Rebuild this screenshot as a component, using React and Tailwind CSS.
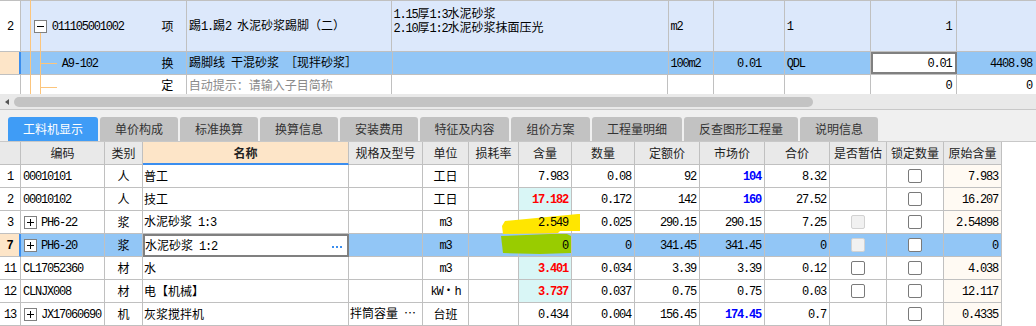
import React from 'react';

const MONO = "font-['Liberation_Mono',monospace] text-[12px] tracking-[-1.2px]";

function T({ s, className = '' }) {
  const parts = String(s).match(/[\x00-\x7f]+|[^\x00-\x7f]+/g) || [];
  return (
    <span className={`whitespace-pre relative z-[2] ${className}`}>
      {parts.map((p, i) =>
        /^[\x00-\x7f]/.test(p) ? (
          <span key={i} className={MONO}>{p}</span>
        ) : (
          <span key={i} className="text-[12px]">{p}</span>
        )
      )}
    </span>
  );
}

const GB = 'border-r border-b border-[#c0c0c0]';

function Cell({ children, className = '', b = GB }) {
  return (
    <div className={`h-[23px] flex items-center overflow-hidden whitespace-nowrap ${b} ${className}`}>
      {children}
    </div>
  );
}

function Box({ sign = '+' }) {
  return (
    <span className="w-[13px] h-[13px] border border-[#808080] bg-white flex items-center justify-center relative shrink-0">
      <span className="absolute w-[7px] h-px bg-black" />
      {sign === '+' && <span className="absolute h-[7px] w-px bg-black" />}
    </span>
  );
}

function Check({ kind }) {
  if (kind === 'disabled')
    return <span className="w-[14px] h-[14px] rounded-[2px] border border-[#d2d2d2] bg-[#f1f1f1]" />;
  return <span className="w-[14px] h-[14px] rounded-[2px] border border-[#7a7a7a] bg-white" />;
}

const rows = [
  { n: '1', code: '00010101', type: '人', name: '普工', spec: '', unit: '工日', qty: '7.983', num: '0.08', dp: '92', mp: '104', mpBlue: true, total: '8.32', est: null, orig: '7.983' },
  { n: '2', code: '00010102', type: '人', name: '技工', spec: '', unit: '工日', qty: '17.182', red: true, num: '0.172', dp: '142', mp: '160', mpBlue: true, total: '27.52', est: null, orig: '16.207' },
  { n: '3', plus: true, code: 'PH6-22', type: '浆', name: '水泥砂浆 1:3', spec: '', unit: 'm3', qty: '2.549', num: '0.025', dp: '290.15', mp: '290.15', total: '7.25', est: 'disabled', orig: '2.54898' },
  { n: '7', plus: true, sel: true, code: 'PH6-20', type: '浆', name: '水泥砂浆 1:2', spec: '', unit: 'm3', qty: '0', num: '0', dp: '341.45', mp: '341.45', total: '0', est: 'disabled', orig: '0' },
  { n: '11', code: 'CL17052360', type: '材', name: '水', spec: '', unit: 'm3', qty: '3.401', red: true, num: '0.034', dp: '3.39', mp: '3.39', total: '0.12', est: 'empty', orig: '4.038' },
  { n: '12', code: 'CLNJX008', type: '材', name: '电【机械】', spec: '', unit: 'kW·h', qty: '3.737', red: true, num: '0.037', dp: '0.75', mp: '0.75', total: '0.03', est: 'empty', orig: '12.117' },
  { n: '13', plus: true, code: 'JX17060690', type: '机', name: '灰浆搅拌机', spec: '拌筒容量 …', unit: '台班', qty: '0.434', num: '0.004', dp: '156.45', mp: '174.45', mpBlue: true, total: '0.7', est: null, orig: '0.4335' },
];

const headers = ['', '编码', '类别', '名称', '规格及型号', '单位', '损耗率', '含量', '数量', '定额价', '市场价', '合价', '是否暂估', '锁定数量', '原始含量'];

const tabs = [
  ['工料机显示', 'w-[90px]'],
  ['单价构成', 'w-[78px]'],
  ['标准换算', 'w-[78px]'],
  ['换算信息', 'w-[78px]'],
  ['安装费用', 'w-[78px]'],
  ['特征及内容', 'w-[89px]'],
  ['组价方案', 'w-[79px]'],
  ['工程量明细', 'w-[90px]'],
  ['反查图形工程量', 'w-[114px]'],
  ['说明信息', 'w-[78px]'],
];

function TableRow({ r }) {
  const bg = r.sel ? 'bg-[#92c6f6]' : 'bg-white';
  return (
    <>
      {r.sel ? (
        <Cell b="border-b border-b-[#c0c0c0] border-r-2 border-r-[#3b8eef]" className="justify-center bg-[#fde5c8] font-bold">
          <T s={r.n} />
        </Cell>
      ) : (
        <Cell className="justify-center bg-white">
          <T s={r.n} />
        </Cell>
      )}
      <Cell className={`${bg} ${r.plus ? 'pl-[3px]' : 'pl-[2px]'}`}>
        {r.plus && <Box />}
        <T s={r.code} className={r.plus ? 'ml-[4px]' : ''} />
      </Cell>
      <Cell className={`${bg} justify-center`}>
        <T s={r.type} />
      </Cell>
      {r.sel ? (
        <Cell b="border-2 border-[#808080]" className="bg-white pl-[0px] pr-[5px] justify-between">
          <T s={r.name} />
          <span className="flex gap-[2px] mt-[2px]">
            <span className="w-[2px] h-[2px] bg-[#3b8eef]" />
            <span className="w-[2px] h-[2px] bg-[#3b8eef]" />
            <span className="w-[2px] h-[2px] bg-[#3b8eef]" />
          </span>
        </Cell>
      ) : (
        <Cell className={`${bg} pl-[1px]`}>
          <T s={r.name} />
        </Cell>
      )}
      <Cell className={`${bg} pl-[1px]`}>
        <T s={r.spec} />
      </Cell>
      <Cell className={`${bg} justify-center`}>
        <T s={r.unit} />
      </Cell>
      <Cell className={bg} />
      <Cell className={`${r.red ? 'bg-[#d9f6f6]' : bg} justify-end pr-[3px]`}>
        <T s={r.qty} className={r.red ? 'text-[#ff0000] font-bold' : ''} />
      </Cell>
      <Cell className={`${bg} justify-end pr-[3px]`}>
        <T s={r.num} />
      </Cell>
      <Cell className={`${bg} justify-end pr-[3px]`}>
        <T s={r.dp} />
      </Cell>
      <Cell className={`${bg} justify-end pr-[3px]`}>
        <T s={r.mp} className={r.mpBlue ? 'text-[#0000ff] font-bold' : ''} />
      </Cell>
      <Cell className={`${bg} justify-end pr-[3px]`}>
        <T s={r.total} />
      </Cell>
      <Cell className={`${bg} justify-center`}>{r.est && <Check kind={r.est} />}</Cell>
      <Cell className={`${bg} justify-center`}>
        <Check kind="empty" />
      </Cell>
      <Cell className={`${r.sel ? bg : 'bg-[#fffaf3]'} justify-end pr-[3px]`}>
        <T s={r.orig} />
      </Cell>
    </>
  );
}

const TB = 'border-r border-[#c0c0c0]';

export default function App() {
  return (
    <div className="w-[1036px] h-[326px] overflow-hidden bg-white text-black text-[12px] font-['Noto_Sans_CJK_SC',sans-serif] leading-[14px]">
      {/* Top grid */}
      <div className="relative h-[94px]">
        <div className="flex h-[52px] border-t border-b border-[#c0c0c0] bg-[#dce8fb]">
          <div className={`w-[21px] bg-white flex items-center justify-center ${TB}`}><T s="2" /></div>
          <div className="w-[129px] flex items-center pl-[31px]"><T s="011105001002" /></div>
          <div className={`w-[38px] flex items-center justify-center ${TB}`}><T s="项" /></div>
          <div className={`w-[207px] flex items-center pl-[2px] ${TB}`}><T s="踢1.踢2 水泥砂浆踢脚（二）" /></div>
          <div className={`w-[278px] flex flex-col pl-[1px] pt-[5px] ${TB}`}>
            <div className="h-[14px] leading-[14px]"><T s="1.15厚1:3水泥砂浆" /></div>
            <div className="h-[14px] leading-[14px]"><T s="2.10厚1:2水泥砂浆抹面压光" /></div>
          </div>
          <div className={`w-[46px] flex items-center pl-[2px] ${TB}`}><T s="m2" /></div>
          <div className={`w-[71px] ${TB}`} />
          <div className={`w-[87px] flex items-center pl-[2px] ${TB}`}><T s="1" /></div>
          <div className={`w-[86px] flex items-center justify-end pr-[4px] ${TB}`}><T s="1" /></div>
          <div className="w-[80px]" />
        </div>
        <div className="flex h-[23px] border-b border-[#c0c0c0] bg-[#92c6f6]">
          <div className="w-[21px] bg-[#fde5c8] border-r-2 border-[#3b8eef]" />
          <div className="w-[129px] flex items-center pl-[41px]"><T s="A9-102" /></div>
          <div className={`w-[38px] flex items-center justify-center ${TB}`}><T s="换" /></div>
          <div className={`w-[207px] flex items-center pl-[2px] ${TB}`}><T s="踢脚线 干混砂浆 ［现拌砂浆］" /></div>
          <div className={`w-[278px] ${TB}`} />
          <div className={`w-[46px] flex items-center pl-[2px] ${TB}`}><T s="100m2" /></div>
          <div className={`w-[71px] flex items-center justify-center ${TB}`}><T s="0.01" /></div>
          <div className={`w-[87px] flex items-center pl-[2px] ${TB}`}><T s="QDL" /></div>
          <div className="w-[86px] flex items-center justify-end pr-[3px] bg-white border-2 border-[#808080]"><T s="0.01" /></div>
          <div className="w-[80px] flex items-center justify-end pr-[4px]"><T s="4408.98" /></div>
        </div>
        <div className="flex h-[19px] bg-white">
          <div className={`w-[21px] ${TB}`} />
          <div className="w-[129px]" />
          <div className={`w-[38px] flex items-center justify-center ${TB}`}><T s="定" /></div>
          <div className={`w-[207px] flex items-center pl-[2px] text-[#8a8a8a] ${TB}`}><T s="自动提示：请输入子目简称" /></div>
          <div className={`w-[278px] ${TB}`} />
          <div className={`w-[46px] ${TB}`} />
          <div className={`w-[71px] ${TB}`} />
          <div className={`w-[87px] ${TB}`} />
          <div className={`w-[86px] flex items-center justify-end pr-[4px] ${TB}`}><T s="0" /></div>
          <div className="w-[80px] flex items-center justify-end pr-[4px]"><T s="0" /></div>
        </div>
        {/* tree lines */}
        <div className="absolute left-[30px] top-0 h-[94px] w-px bg-[#fcc57c]" />
        <div className="absolute left-[40px] top-[33px] h-[61px] w-px bg-[#fcc57c]" />
        <div className="absolute left-[41px] top-[63px] h-px w-[16px] bg-[#fcc57c]" />
        <div className="absolute left-[41px] top-[87px] h-px w-[16px] bg-[#fcc57c]" />
        <div className="absolute left-[34px] top-[20px]">
          <Box sign="-" />
        </div>
      </div>

      {/* Scrollbar */}
      <div className="h-[16px] bg-[#e9e9e9] border-b border-[#c8c8c8] flex items-center">
        <span className="ml-[5px] w-0 h-0 border-y-[3px] border-y-transparent border-r-[4px] border-r-[#555]" />
        <span className="ml-[5px] w-[799px] h-[10px] rounded-full bg-[#c3c3c3]" />
      </div>

      {/* Tabs */}
      <div className="h-[32px] bg-[#f0f0f0] border-b border-[#c8c8c8] flex items-end pl-[8px] gap-[2px]">
        {tabs.map(([t, w], i) => (
          <div
            key={t}
            className={`${w} h-[24px] rounded-t-[3px] flex items-center justify-center text-[12px] ${
              i === 0 ? 'bg-[#3f9cf6] text-white' : 'bg-[#c2c2c2] text-[#333]'
            }`}
          >
            {t}
          </div>
        ))}
      </div>

      {/* Table */}
      <div className="relative">
        <div className="grid w-[1002px] grid-cols-[21px_84px_38px_206px_74px_46px_50px_53px_63px_65px_65px_65px_57px_57px_58px]">
          {headers.map((h, i) =>
            i === 3 ? (
              <Cell key={i} b="border-r border-r-[#c0c0c0] border-b-2 border-b-[#3b8eef]" className="justify-center bg-[#fde5c8] font-bold text-[12px] text-[#222]">
                {h}
              </Cell>
            ) : (
              <Cell key={i} className="justify-center bg-[#e9e9e9] text-[12px] text-[#222]">
                {h}
              </Cell>
            )
          )}
          {rows.map((r) => (
            <TableRow key={r.n} r={r} />
          ))}
        </div>
        <svg className="absolute left-0 top-0 z-[1] pointer-events-none" width="1002" height="184">
          <polygon points="505,79 578,72 580,72 580,89 560,89 558,91 503,92 502,84" fill="#ffe600" />
          <polygon points="501,94 550,92 567,92 571,94 571,111 540,112 503,111" fill="#99cc00" />
        </svg>
      </div>
    </div>
  );
}
